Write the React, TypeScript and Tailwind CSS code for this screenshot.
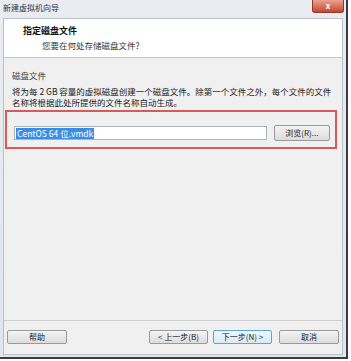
import React from "react";

const font = { fontFamily: '"Noto Sans CJK SC", "Liberation Sans", sans-serif' };

const WinButton = ({ label, focused = false, className = "" }: { label: string; focused?: boolean; className?: string }) => (
  <div
    className={
      "flex h-[14px] items-center justify-center rounded-[2px] border text-[8px] leading-none text-[#222] bg-gradient-to-b " +
      (focused
        ? "border-[#5aa6d6] from-[#eef7fc] to-[#d6ebf7] "
        : "border-[#9a9a9a] from-[#f4f4f4] to-[#dcdcdc] ") +
      className
    }
  >
    {label}
  </div>
);

export default function App() {
  return (
    <div className="h-[361px] w-[351px] overflow-hidden bg-white" style={font}>
      <div className="flex h-[359px] w-[348px] flex-col border-r-[2px] border-b-[2px] border-r-[#3c3c3c] border-b-[#3c3c3c] bg-gradient-to-b from-[#e9edf1] to-[#e1e6eb]">
        {/* title bar */}
        <div className="flex h-[18px] shrink-0 items-start justify-between">
          <span className="pl-[3px] pt-[3px] text-[8px] leading-[10px] text-[#333]">新建虚拟机向导</span>
          <div className="mr-[2px] flex h-[13px] w-[32px] items-center justify-center rounded-b-[3px] border border-t-0 border-[#8e3b2c] bg-gradient-to-b from-[#e8a190] to-[#c6452c] text-[8px] font-bold leading-none text-white">
            x
          </div>
        </div>

        {/* client area */}
        <div className="mx-[3px] mb-[2px] flex flex-1 flex-col border border-[#b9c0c7] bg-[#f0f0f0]">
          <div className="flex h-[39px] shrink-0 flex-col border-b border-[#c9c9c9] bg-white pl-[19px] pt-[6px]">
            <span className="text-[9px] font-bold leading-[12px] text-[#111]">指定磁盘文件</span>
            <span className="pl-[19px] pt-[2px] text-[8.5px] leading-[12px] text-[#333]">您要在何处存储磁盘文件?</span>
          </div>

          <div className="flex flex-1 flex-col pt-[12px]">
            <span className="pl-[8px] text-[8.5px] leading-[11px] text-[#444]">磁盘文件</span>
            <p className="pl-[8px] pr-[6px] pt-[5px] text-[8.5px] leading-[11px] text-[#222]">
              将为每 2 GB 容量的虚拟磁盘创建一个磁盘文件。除第一个文件之外，每个文件的文件名称将根据此处所提供的文件名称自动生成。
            </p>
            <div className="ml-[1px] mr-[5px] mt-[2px] flex h-[39px] items-end gap-[7px] border-[2px] border-[#d9595b] pb-[6px] pl-[7px] pr-[5px]">
              <div className="mb-[1px] flex h-[14px] w-[256px] items-center border border-[#abb3bb] bg-white pl-[1px]">
                <span className="bg-[#3a8ee6] px-[1px] text-[8.5px] leading-[11px] text-white">CentOS 64 位.vmdk</span>
              </div>
              <WinButton label="浏览(R)..." className="h-[16px] w-[57px]" />
            </div>
          </div>

          <div className="flex h-[34px] shrink-0 items-start border-t border-[#cfcfcf] pl-[3px] pr-[3px] pt-[9px]">
            <WinButton label="帮助" className="w-[60px]" />
            <div className="flex-1" />
            <WinButton label="< 上一步(B)" className="w-[59px]" />
            <WinButton label="下一步(N) >" focused className="ml-[5px] w-[59px]" />
            <WinButton label="取消" className="ml-[7px] w-[60px]" />
          </div>
        </div>
      </div>
    </div>
  );
}
